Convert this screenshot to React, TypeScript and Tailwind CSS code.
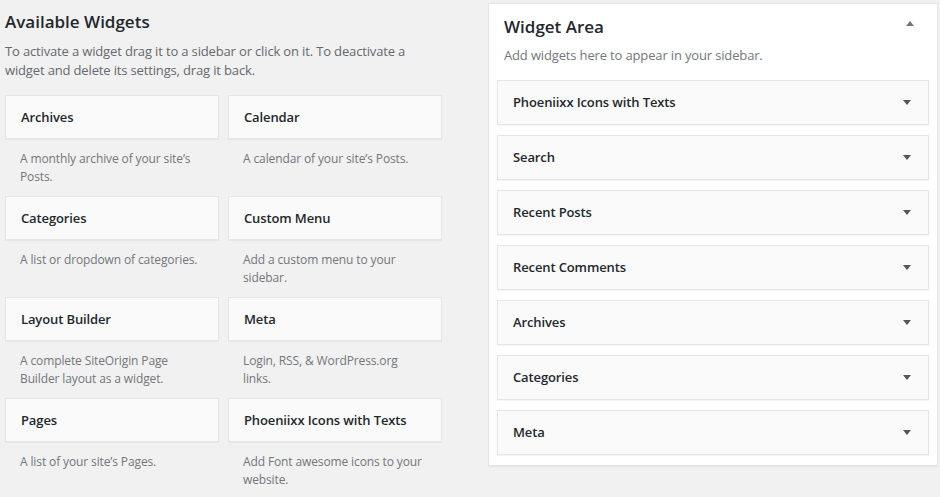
import React from "react"

const available = [
  { title: "Archives", desc: "A monthly archive of your site’s Posts." },
  { title: "Calendar", desc: "A calendar of your site’s Posts." },
  { title: "Categories", desc: "A list or dropdown of categories." },
  { title: "Custom Menu", desc: "Add a custom menu to your sidebar." },
  { title: "Layout Builder", desc: "A complete SiteOrigin Page Builder layout as a widget." },
  { title: "Meta", desc: "Login, RSS, & WordPress.org links." },
  { title: "Pages", desc: "A list of your site’s Pages." },
  { title: "Phoeniixx Icons with Texts", desc: "Add Font awesome icons to your website." },
]

const sidebar = [
  "Phoeniixx Icons with Texts",
  "Search",
  "Recent Posts",
  "Recent Comments",
  "Archives",
  "Categories",
  "Meta",
]

function Arrow({ up }: { up?: boolean }) {
  return (
    <svg width="8" height="5" viewBox="0 0 8 5" className={up ? "fill-[#72777c]" : "fill-[#50575e]"}>
      {up ? <polygon points="4,0 8,5 0,5" /> : <polygon points="0,0 8,0 4,5" />}
    </svg>
  )
}

export default function App() {
  return (
    <div
      className="w-[940px] h-[497px] bg-[#f1f1f1] flex overflow-hidden text-[#23282d]"
      style={{ fontFamily: '"Open Sans", "Noto Sans", sans-serif' }}
    >
      {/* available widgets */}
      <div className="w-[488px] pl-[5px] shrink-0">
        <h2 className="mt-[10px] text-[17px] leading-[24px] font-semibold">Available Widgets</h2>
        <p className="mt-[8px] text-[13px] leading-[19px] tracking-[-0.15px] text-[#646970] w-[420px]">
          To activate a widget drag it to a sidebar or click on it. To deactivate a widget and delete its settings, drag it back.
        </p>
        <div className="mt-[15px] grid grid-cols-[214px_214px] gap-x-[9px]">
          {available.map((w) => (
            <div key={w.title} className="h-[101px]">
              <div className="h-[44px] flex items-center px-[15px] pt-[1px] bg-[#fafafa] border border-[#e5e5e5] shadow-[0_1px_1px_rgba(0,0,0,0.04)] text-[13px] tracking-[-0.12px] font-semibold">
                {w.title}
              </div>
              <p className="pt-[11px] px-[15px] text-[12px] leading-[18px] tracking-[-0.12px] text-[#72777c]">{w.desc}</p>
            </div>
          ))}
        </div>
      </div>

      {/* widget area */}
      <div className="mt-[3px] w-[450px] h-[463px] bg-white border border-[#e5e5e5] shadow-[0_1px_1px_rgba(0,0,0,0.04)] px-[8px]">
        <div className="flex items-start justify-between pl-[7px] pr-[15px] pt-[12px]">
          <h2 className="text-[17px] leading-[22px] font-semibold">Widget Area</h2>
          <div className="pt-[5px]">
            <Arrow up />
          </div>
        </div>
        <p className="pl-[7px] mt-[8px] text-[13px] leading-[19px] tracking-[-0.15px] text-[#72777c]">
          Add widgets here to appear in your sidebar.
        </p>
        <div className="mt-[15px] flex flex-col gap-[10px]">
          {sidebar.map((s) => (
            <div
              key={s}
              className="h-[45px] flex items-center justify-between pl-[15px] pr-[17px] bg-[#fafafa] border border-[#e5e5e5] shadow-[0_1px_1px_rgba(0,0,0,0.04)] text-[13px] tracking-[-0.12px] font-semibold"
            >
              <span>{s}</span>
              <Arrow />
            </div>
          ))}
        </div>
      </div>
    </div>
  )
}
